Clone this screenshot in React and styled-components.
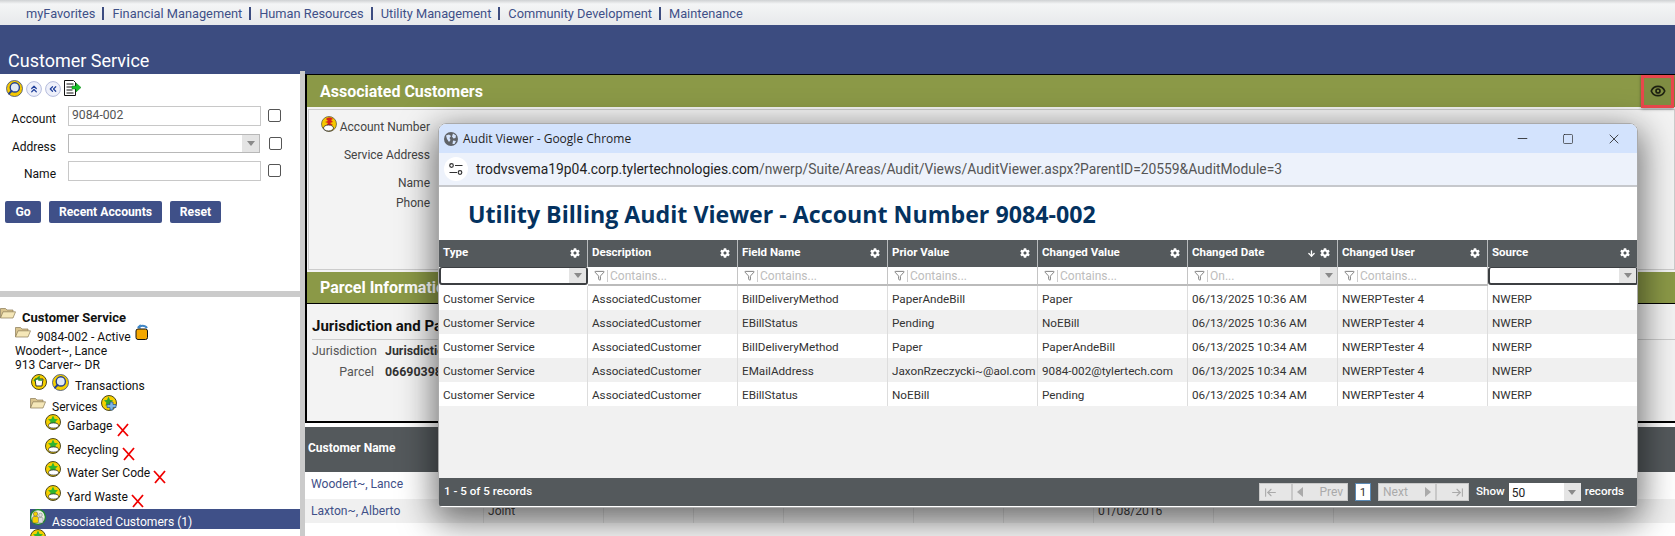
import React from 'react'
import styled, { createGlobalStyle } from 'styled-components'
import { FaCog } from 'react-icons/fa'
import { Eye, Minus, Square, X, Filter, ChevronsUp, ChevronsLeft, ArrowDown, ArrowLeftToLine, ArrowRightToLine } from 'lucide-react'

const GlobalStyle = createGlobalStyle`
  html, body {
    margin: 0;
    padding: 0;
    background: #fff;
    overflow: hidden;
    font-family: Roboto, "Liberation Sans", sans-serif;
  }
  * { box-sizing: border-box; }
`

const Page = styled.div`
  position: relative;
  width: 1675px;
  height: 536px;
  overflow: hidden;
  color: #222;
`

const TopNav = styled.nav`
  height: 25px;
  display: flex;
  align-items: center;
  padding: 1px 0 0 26px;
  background: linear-gradient(#cfd1d3 0, #f4f5f6 4px, #e7e9eb 100%);
  font-size: 12.8px;
  color: #3f5088;
`

const NavSep = styled.span`
  width: 2px;
  height: 13px;
  margin: 0 8px 0 7px;
  background: #3c4c80;
`

const TitleBand = styled.div`
  height: 49px;
  display: flex;
  align-items: flex-end;
  padding: 0 0 3px 8px;
  background: #3c4c80;
  color: #fff;
  font-size: 18px;
`

const Body = styled.div`
  display: flex;
  height: 462px;
`

const LeftPane = styled.div`
  width: 300px;
  flex: none;
`

const Splitter = styled.div`
  width: 5px;
  flex: none;
  margin-top: -3px;
  background: #cbcbcb;
`

const SearchBox = styled.div`
  height: 217px;
  padding: 6px 0 0 6px;
`

const Toolbar = styled.div`
  display: flex;
  gap: 3px;
  height: 17px;
  margin-bottom: 9px;
`

const FormRow = styled.div`
  display: flex;
  align-items: flex-start;
  height: 20px;
  margin-bottom: ${p => p.$mb || 8}px;
`

const FieldLabel = styled.label`
  width: 50px;
  margin-right: 12px;
  padding-top: 6px;
  text-align: right;
  font-size: 12px;
  color: #111;
`

const TextField = styled.div`
  width: 193px;
  height: 20px;
  padding: 1px 3px;
  background: #fff;
  border: 1px solid #c8c8c8;
  font-size: 12.2px;
  color: #555;
`

const SelectField = styled.div`
  width: 192px;
  height: 19px;
  display: flex;
  justify-content: flex-end;
  background: #fff;
  border: 1px solid #b8b8b8;
`

const SelectArrow = styled.span`
  width: 17px;
  display: flex;
  align-items: center;
  justify-content: center;
  background: #e4e4e4;
  &::after {
    content: '';
    border-left: 4px solid transparent;
    border-right: 4px solid transparent;
    border-top: 5px solid #8a8a8a;
  }
`

const Check = styled.span`
  width: 13px;
  height: 13px;
  margin: 3px 0 0 ${p => p.$ml || 7}px;
  background: #fff;
  border: 1px solid #555;
  border-radius: 2px;
`

const ButtonRow = styled.div`
  display: flex;
  gap: 8px;
  margin: 20px 0 0 -1px;
`

const ActionButton = styled.button`
  height: 22px;
  width: ${p => p.$w}px;
  padding: 0;
  background: #3f5088;
  border: 0;
  border-radius: 2px;
  color: #fff;
  font-family: Roboto, sans-serif;
  font-size: 12.2px;
  font-weight: 700;
`

const PaneDivider = styled.div`
  height: 6px;
  background: #cbcbcb;
`

const Tree = styled.div`
  padding-top: 10px;
  overflow: hidden;
  height: 239px;
`

const TreeRow = styled.div`
  display: flex;
  align-items: flex-start;
  height: ${p => p.$h || 24}px;
  padding-left: ${p => p.$indent || 0}px;
  font-size: ${p => (p.$bold ? 13 : 12.1)}px;
  font-weight: ${p => (p.$bold ? 700 : 400)};
  color: #111;
`

const TreeLabel = styled.span`
  margin: ${p => p.$top ?? 4}px 0 0 ${p => p.$left ?? 6}px;
  white-space: nowrap;
`

const SelectedRow = styled(TreeRow)`
  margin: 0 0 0 30px;
  padding: 0;
  background: #3f5088;
  color: #fff;
  height: 20px;
`

const RightPane = styled.div`
  flex: 1;
  min-width: 0;
`

const DetailBlock = styled.div`
  height: 349px;
  border-left: 2px solid #000;
  border-top: 1px solid #000;
  border-bottom: 2px solid #000;
  background: #f3f3f3;
`

const SectionHead = styled.div`
  display: flex;
  align-items: center;
  justify-content: space-between;
  height: 32px;
  padding-left: 13px;
  background: #8b9947;
  color: #fff;
  font-size: 16px;
  font-weight: 700;
  border-bottom: ${p => (p.$line ? '1px solid #000' : '0')};
`

const EyeBox = styled.span`
  width: 33px;
  height: 33px;
  margin-right: 1px;
  display: flex;
  align-items: center;
  justify-content: center;
  background: #7f8d42;
  border: 3px solid #e8474c;
  box-shadow: 0 1px 3px rgba(0, 0, 0, 0.4);
  color: #1c1f10;
`

const AccountPanel = styled.div`
  height: 161px;
  margin: 2px 0 2px 1px;
  padding: 3px 0 0 0;
  background: #f3f3f3;
  border: 1px solid #ccc;
  font-size: 12px;
  color: #444;
`

const AccountRow = styled.div`
  display: flex;
  justify-content: flex-end;
  align-items: center;
  width: 121px;
  height: ${p => p.$h || 28}px;
  gap: 3px;
`

const ParcelPanel = styled.div`
  padding: 13px 0 0 5px;
`

const ParcelTitle = styled.div`
  padding-bottom: 4px;
  border-bottom: 1px solid #ccc;
  font-size: 15px;
  font-weight: 700;
  color: #111;
`

const ParcelRow = styled.div`
  display: flex;
  gap: 11px;
  margin-top: ${p => p.$mt}px;
  font-size: 12.4px;
  color: #555;
`

const ParcelKey = styled.span`
  width: 62px;
  text-align: right;
`

const ParcelValue = styled.span`
  font-weight: 700;
  color: #333;
`

const CustomerTable = styled.div`
  margin-top: 4px;
`

const CustomerHead = styled.div`
  height: 45px;
  display: flex;
  align-items: center;
  padding: 0 0 4px 3px;
  background: #54595c;
  color: #fff;
  font-size: 12px;
  font-weight: 700;
`

const CustomerRow = styled.div`
  display: grid;
  grid-template-columns: 179px 120px 90px 90px 130px 90px 90px 120px 120px 1fr;
  height: ${p => p.$h}px;
  background: ${p => (p.$alt ? '#f0f0f0' : '#fff')};
`

const CustomerCell = styled.div`
  padding: 5px 0 0 ${p => (p.$link ? 6 : 4)}px;
  border-right: 1px solid #ddd;
  font-size: 12.1px;
  color: ${p => (p.$link ? '#3f5088' : '#444')};
  white-space: nowrap;
`

const AuditWindow = styled.div`
  position: absolute;
  left: 438px;
  top: 123px;
  width: 1200px;
  height: 385px;
  display: flex;
  flex-direction: column;
  overflow: hidden;
  background: #fff;
  border: 1px solid #aaa;
  border-radius: 8px 8px 4px 4px;
`

const WindowShadow = styled.div`
  position: absolute;
  left: 438px;
  top: 123px;
  width: 1200px;
  height: 385px;
  border-radius: 8px;
  box-shadow: 0 10px 34px 4px rgba(0, 0, 0, 0.55);
`

const ChromeBar = styled.div`
  height: 29px;
  flex: none;
  display: flex;
  align-items: center;
  padding-left: 5px;
  background: #d3e3fd;
  font-size: 12.5px;
  color: #1f1f1f;
`

const ChromeTitle = styled.span`
  flex: 1;
  margin-left: 5px;
  font-family: "Open Sans", sans-serif;
  font-size: 12px;
`

const WinButton = styled.span`
  width: 46px;
  display: flex;
  justify-content: center;
`

const UrlBar = styled.div`
  height: 34px;
  flex: none;
  display: flex;
  align-items: center;
  padding-left: 5px;
  background: #edf2fb;
  border-bottom: 2px solid #c6c8cc;
  font-size: 13.85px;
  color: #1f1f1f;
`

const SiteChip = styled.span`
  width: 24px;
  height: 24px;
  display: flex;
  align-items: center;
  justify-content: center;
  margin-right: 8px;
  border-radius: 50%;
  background: #fff;
`

const UrlMuted = styled.span`
  color: #555;
`

const AuditHeading = styled.h1`
  height: 53px;
  flex: none;
  margin: 0;
  padding: 12px 0 0 29px;
  font-family: "Open Sans", sans-serif;
  font-size: 23.2px;
  font-weight: 700;
  line-height: 30px;
  color: #04325f;
`

const Grid = styled.div`
  flex: 1;
  min-height: 0;
  background: #f1f1f1;
`

const GridRow = styled.div`
  display: grid;
  grid-template-columns: 149px repeat(7, 150px);
  height: ${p => p.$h || 24}px;
  background: ${p => p.$bg || '#fff'};
`

const HeadCell = styled.div`
  display: flex;
  align-items: flex-start;
  justify-content: space-between;
  padding: 5px 7px 0 4px;
  border-right: 1px solid #b8bbbd;
  color: #fff;
  font-size: 11.5px;
  font-weight: 700;
  line-height: 14px;
`

const HeadIcons = styled.span`
  display: flex;
  align-items: center;
  gap: 4px;
  padding-top: 3px;
`

const FilterCell = styled.div`
  display: flex;
  align-items: center;
  justify-content: space-between;
  padding-left: 6px;
  border-right: 1px solid #c4c4c4;
  border-bottom: 2px solid #bbb;
  background: #fff;
  font-size: 12px;
  color: #bdbdbd;
`

const FilterText = styled.span`
  display: flex;
  align-items: center;
  gap: 2px;
  flex: 1;
`

const FilterBar = styled.span`
  width: 1px;
  height: 12px;
  background: #ccc;
`

const DropFilter = styled.div`
  display: flex;
  justify-content: flex-end;
  height: 18px;
  background: #fff;
  border: 2px solid #3c3f42;
  border-top-width: 1px;
  border-radius: 3px;
  overflow: hidden;
`

const DataCell = styled.div`
  display: flex;
  align-items: center;
  padding: 1px 0 0 4px;
  border-right: 1px solid #ddd;
  font-size: 11.7px;
  color: #333;
  white-space: nowrap;
`

const GridEmpty = styled.div`
  height: 71px;
  background: #f1f1f1;
`

const Footer = styled.div`
  height: 29px;
  flex: none;
  display: flex;
  align-items: center;
  justify-content: space-between;
  padding: 0 13px 0 5px;
  background: #54595c;
  border-bottom: 1px solid #fff;
  color: #fff;
  font-size: 11.6px;
  font-weight: 500;
`

const FooterText = styled.span`
  margin: 0 0 3px ${p => p.$ml || 0}px;
`

const Pager = styled.div`
  display: flex;
  align-items: center;
`

const PagerButton = styled.span`
  width: ${p => p.$w}px;
  height: 18px;
  display: flex;
  align-items: center;
  justify-content: ${p => p.$end ? 'flex-end' : 'space-between'};
  padding: 0 4px;
  margin-left: ${p => p.$ml || 0}px;
  background: #e6e6e6;
  border: 1px solid #c8c8c8;
  font-size: 12px;
  font-weight: 400;
  color: #aaa;
`

const PageBox = styled.span`
  width: 16px;
  height: 18px;
  margin-left: 7px;
  display: flex;
  align-items: center;
  justify-content: center;
  background: #fff;
  border: 1px solid #5b8ab5;
  font-weight: 400;
  color: #333;
`

const ShowSelect = styled.span`
  width: 72px;
  height: 18px;
  margin: 0 4px;
  display: flex;
  justify-content: space-between;
  background: #fff;
  color: #222;
  font-size: 12px;
  font-weight: 400;
  padding-left: 3px;
  line-height: 20px;
`

const Tri = styled.span`
  width: 0;
  height: 0;
  border-top: 5px solid transparent;
  border-bottom: 5px solid transparent;
  ${p => (p.$dir === 'left' ? 'border-right: 6px solid #aaa;' : 'border-left: 6px solid #aaa;')}
`

/* little app icons, drawn by hand */
const MagnifierIcon = ({ size = 17, ring = '#f5c800' }) => (
  <svg width={size} height={size} viewBox="0 0 17 17">
    <circle cx="8.5" cy="8.5" r="8" fill={ring} stroke="#3a4a7a" strokeWidth="0.8" />
    <circle cx="8.8" cy="7.4" r="4.6" fill="#dfe8f6" stroke="#24408e" strokeWidth="1.4" />
    <path d="M5.6 11 L3 13.6" stroke="#24408e" strokeWidth="2" strokeLinecap="round" />
  </svg>
)

const RoundChevrons = ({ Icon }) => (
  <svg width="16" height="16" viewBox="0 0 16 16" style={{ marginTop: 1 }}>
    <circle cx="8" cy="8" r="7.4" fill="#eef0fa" stroke="#b4bbdc" />
    <Icon x="2.5" y="2.5" width="11" height="11" color="#1f3f9a" strokeWidth={2.6} />
  </svg>
)

const DocArrowIcon = () => (
  <svg width="17" height="16" viewBox="0 0 17 16">
    <path d="M.5.5h9l2 2v13h-11z" fill="#fff" stroke="#111" />
    <path d="M2.5 4h7M2.5 7h6M2.5 10h6M2.5 13h7" stroke="#111" />
    <path d="M8 6h4V3l5 4.5L12 12V9H8z" fill="#19c32a" stroke="#0a7d16" strokeWidth="0.5" />
  </svg>
)

const FolderIcon = () => (
  <svg width="16" height="12" viewBox="0 0 16 12">
    <path d="M.5 11V1.5h5l1.500 1.500H13v2" fill="#d9c48f" stroke="#8a7a55" strokeWidth="0.7" />
    <path d="M.5 11 3 4.800h12.500L13 11z" fill="#f5e7b8" stroke="#8a7a55" strokeWidth="0.7" />
  </svg>
)

const AccountIcon = () => (
  <svg width="14" height="16" viewBox="0 0 14 16" style={{ marginLeft: 4, marginTop: -2 }}>
    <path d="M3 4a5 4 0 0 1 9 0" fill="none" stroke="#3f86c6" strokeWidth="2" />
    <path d="M5.500 0v5l-3-2z" fill="#3f86c6" />
    <rect x="1" y="5" width="11.500" height="10.500" rx="2" fill="#f5a800" stroke="#111" />
  </svg>
)

const BadgeIcon = ({ kind }) => (
  <svg width="16" height="16" viewBox="0 0 16 16">
    <circle cx="8" cy="8" r="7.500" fill="#f5d000" stroke="#3a3610" strokeWidth="0.9" />
    {kind === 'tx' && <path d="M4 5h8l-1 7H5z" fill="#fff" stroke="#333" />}
    {kind === 'tx' && <path d="M3 7 8 3v3h3" fill="none" stroke="#2a9a2a" strokeWidth="1.500" />}
    {kind === 'service' && <path d="M8 1.500 9.600 5 13 5.300 10.500 7.500 11.200 11 8 9.200 4.800 11 5.500 7.500 3 5.300 6.400 5z" fill="#2fb52f" />}
    {kind === 'service' && <ellipse cx="8.500" cy="11.500" rx="5" ry="2.600" fill="#fff" stroke="#333" strokeWidth="0.8" />}
    {kind === 'add' && <path d="M7.500 1.500 9 5 12 5.300 9.800 7.500 10.500 11 7.500 9.200 4.500 11 5.200 7.500 3 5.300 6 5z" fill="#2fa52f" />}
    {kind === 'add' && <path d="M9 7h3v2.500h3v3h-3V15H9v-2.500H6v-3h3z" fill="#7db4e6" stroke="#27507c" strokeWidth="0.7" />}
  </svg>
)

const PeopleIcon = () => (
  <svg width="16" height="16" viewBox="0 0 16 16">
    <circle cx="8" cy="8" r="7.400" fill="#e9eee0" stroke="#1f8a2f" strokeWidth="1.300" />
    <circle cx="5.500" cy="5" r="2.200" fill="#f5d000" stroke="#555" strokeWidth="0.5" />
    <rect x="2.500" y="7.500" width="6" height="6.500" rx="1.500" fill="#f5d000" stroke="#555" strokeWidth="0.5" />
    <circle cx="10.500" cy="6" r="1.800" fill="#ddd" stroke="#777" strokeWidth="0.5" />
    <rect x="8.500" y="8.500" width="4.500" height="5.500" rx="1.200" fill="#ddd" stroke="#777" strokeWidth="0.5" />
  </svg>
)

const DragonIcon = () => (
  <svg width="16" height="16" viewBox="0 0 16 16" style={{ marginTop: -6 }}>
    <circle cx="8" cy="8" r="7.500" fill="#f5c800" stroke="#333" strokeWidth="0.6" />
    <path d="M5 3c2-2 5-2 7 0l-2 1 2 2-3 1 3 2-7 1 2-3-3-1 3-1z" fill="#d6211f" />
    <ellipse cx="7.500" cy="12" rx="5" ry="3" fill="#fff" stroke="#333" strokeWidth="0.8" />
  </svg>
)

const RedX = () => (
  <svg width="14" height="14" viewBox="0 0 14 14" style={{ margin: '9px 0 0 3px', flex: 'none' }}>
    <path d="M1 1 12 13M12 1 2 13" stroke="#f00000" strokeWidth="1.800" />
  </svg>
)

const GlobeIcon = () => (
  <svg width="14" height="14" viewBox="0 0 14 14">
    <circle cx="7" cy="7" r="7" fill="#5f6368" />
    <path d="M2 3.500 5 2.500 7 4 5.500 6 6.500 8 5 10 3 7zM9 1.500l3 2-.5 2.500-2 .5L8 4.500zM9 8.500l3 .5-1.500 3L8.500 12z" fill="#d3e3fd" />
  </svg>
)

const TuneIcon = () => (
  <svg width="14" height="12" viewBox="0 0 14 12" fill="none" stroke="#333" strokeWidth="1.200">
    <circle cx="2.500" cy="2.500" r="1.800" />
    <path d="M6 2.500h7.500M.5 9.500H8" />
    <circle cx="11" cy="9.500" r="1.800" />
  </svg>
)

const COLUMNS = ['Type', 'Description', 'Field Name', 'Prior Value', 'Changed Value', 'Changed Date', 'Changed User', 'Source']

const AUDIT_ROWS = [
  ['BillDeliveryMethod', 'PaperAndeBill', 'Paper', '06/13/2025 10:36 AM'],
  ['EBillStatus', 'Pending', 'NoEBill', '06/13/2025 10:36 AM'],
  ['BillDeliveryMethod', 'Paper', 'PaperAndeBill', '06/13/2025 10:34 AM'],
  ['EMailAddress', 'JaxonRzeczycki~@aol.com', '9084-002@tylertech.com', '06/13/2025 10:34 AM'],
  ['EBillStatus', 'NoEBill', 'Pending', '06/13/2025 10:34 AM'],
]

const SERVICES = ['Garbage', 'Recycling', 'Water Ser Code', 'Yard Waste']

const NAV_ITEMS = ['myFavorites', 'Financial Management', 'Human Resources', 'Utility Management', 'Community Development', 'Maintenance']

const ContainsFilter = ({ text = 'Contains...', arrow }) => (
  <FilterCell>
    <FilterText>
      <Filter size={11} color="#777" />
      <FilterBar />
      {text}
    </FilterText>
    {arrow && <SelectArrow style={{ alignSelf: 'stretch' }} />}
  </FilterCell>
)

const App = () => (
  <Page>
    <GlobalStyle />
    <TopNav>
      {NAV_ITEMS.map((item, i) => (
        <React.Fragment key={item}>
          {i > 0 && <NavSep />}
          <span>{item}</span>
        </React.Fragment>
      ))}
    </TopNav>
    <TitleBand>Customer Service</TitleBand>
    <Body>
      <LeftPane>
        <SearchBox>
          <Toolbar>
            <MagnifierIcon />
            <RoundChevrons Icon={ChevronsUp} />
            <RoundChevrons Icon={ChevronsLeft} />
            <DocArrowIcon />
          </Toolbar>
          <FormRow>
            <FieldLabel>Account</FieldLabel>
            <TextField>9084-002</TextField>
            <Check />
          </FormRow>
          <FormRow $mb={7}>
            <FieldLabel>Address</FieldLabel>
            <SelectField>
              <SelectArrow />
            </SelectField>
            <Check $ml={9} />
          </FormRow>
          <FormRow>
            <FieldLabel>Name</FieldLabel>
            <TextField />
            <Check />
          </FormRow>
          <ButtonRow>
            <ActionButton $w={36}>Go</ActionButton>
            <ActionButton $w={113}>Recent Accounts</ActionButton>
            <ActionButton $w={51}>Reset</ActionButton>
          </ButtonRow>
        </SearchBox>
        <PaneDivider />
        <Tree>
          <TreeRow $h={19} $bold>
            <FolderIcon />
            <TreeLabel $left={6} $top={3}>Customer Service</TreeLabel>
          </TreeRow>
          <TreeRow $h={18} $indent={15}>
            <FolderIcon />
            <TreeLabel $top={4}>9084-002 - Active</TreeLabel>
            <AccountIcon />
          </TreeRow>
          <TreeRow $h={14} $indent={15}>Woodert~, Lance</TreeRow>
          <TreeRow $h={16} $indent={15}>913 Carver~ DR</TreeRow>
          <TreeRow $h={21} $indent={31}>
            <BadgeIcon kind="tx" />
            <span style={{ width: 5 }} />
            <MagnifierIcon size={17} ring="#f5d000" />
            <TreeLabel $top={5}>Transactions</TreeLabel>
          </TreeRow>
          <TreeRow $h={19} $indent={30}>
            <span style={{ marginTop: 2 }}><FolderIcon /></span>
            <TreeLabel $top={5}>Services</TreeLabel>
            <span style={{ marginLeft: 3 }}><BadgeIcon kind="add" /></span>
          </TreeRow>
          {SERVICES.map(name => (
            <TreeRow key={name} $indent={45} $h={name === 'Yard Waste' ? 24 : 23.7}>
              <BadgeIcon kind="service" />
              <TreeLabel $top={5}>{name}</TreeLabel>
              <RedX />
            </TreeRow>
          ))}
          <SelectedRow>
            <PeopleIcon />
            <TreeLabel $top={6}>Associated Customers (1)</TreeLabel>
          </SelectedRow>
          <TreeRow $indent={30} $h={10}>
            <BadgeIcon kind="service" />
          </TreeRow>
        </Tree>
      </LeftPane>
      <Splitter />
      <RightPane>
        <DetailBlock>
          <SectionHead>
            Associated Customers
            <EyeBox>
              <Eye size={16} strokeWidth={2.5} />
            </EyeBox>
          </SectionHead>
          <AccountPanel>
            <AccountRow>
              <DragonIcon />
              Account Number
            </AccountRow>
            <AccountRow>Service Address</AccountRow>
            <AccountRow>Name</AccountRow>
            <AccountRow $h={12}>Phone</AccountRow>
          </AccountPanel>
          <SectionHead $line>Parcel Information</SectionHead>
          <ParcelPanel>
            <ParcelTitle>Jurisdiction and Parcel</ParcelTitle>
            <ParcelRow $mt={3}>
              <ParcelKey>Jurisdiction</ParcelKey>
              <ParcelValue>Jurisdiction</ParcelValue>
            </ParcelRow>
            <ParcelRow $mt={6}>
              <ParcelKey>Parcel</ParcelKey>
              <ParcelValue>06690398</ParcelValue>
            </ParcelRow>
          </ParcelPanel>
        </DetailBlock>
        <CustomerTable>
          <CustomerHead>Customer Name</CustomerHead>
          <CustomerRow $h={27}>
            <CustomerCell $link>Woodert~, Lance</CustomerCell>
          </CustomerRow>
          <CustomerRow $h={24} $alt>
            <CustomerCell $link>Laxton~, Alberto</CustomerCell>
            <CustomerCell>Joint</CustomerCell>
            <CustomerCell />
            <CustomerCell />
            <CustomerCell />
            <CustomerCell />
            <CustomerCell />
            <CustomerCell>01/08/2016</CustomerCell>
            <CustomerCell />
          </CustomerRow>
        </CustomerTable>
      </RightPane>
    </Body>

    <WindowShadow />
    <AuditWindow>
      <ChromeBar>
        <GlobeIcon />
        <ChromeTitle>Audit Viewer - Google Chrome</ChromeTitle>
        <WinButton><Minus size={15} strokeWidth={1.3} /></WinButton>
        <WinButton><Square size={12} strokeWidth={1.3} /></WinButton>
        <WinButton><X size={16} strokeWidth={1.2} /></WinButton>
      </ChromeBar>
      <UrlBar>
        <SiteChip><TuneIcon /></SiteChip>
        trodvsvema19p04.corp.tylertechnologies.com
        <UrlMuted>/nwerp/Suite/Areas/Audit/Views/AuditViewer.aspx?ParentID=20559&amp;AuditModule=3</UrlMuted>
      </UrlBar>
      <AuditHeading>Utility Billing Audit Viewer - Account Number 9084-002</AuditHeading>
      <Grid>
        <GridRow $h={27} $bg="#54595c">
          {COLUMNS.map(col => (
            <HeadCell key={col}>
              {col}
              <HeadIcons>
                {col === 'Changed Date' && <ArrowDown size={9} strokeWidth={3.5} />}
                <FaCog size={10} />
              </HeadIcons>
            </HeadCell>
          ))}
        </GridRow>
        <GridRow $h={19}>
          <DropFilter><SelectArrow /></DropFilter>
          <ContainsFilter />
          <ContainsFilter />
          <ContainsFilter />
          <ContainsFilter />
          <ContainsFilter text="On..." arrow />
          <ContainsFilter />
          <DropFilter><SelectArrow /></DropFilter>
        </GridRow>
        {AUDIT_ROWS.map((row, i) => (
          <GridRow key={i} $bg={i % 2 ? '#f0f0f0' : '#fff'}>
            <DataCell>Customer Service</DataCell>
            <DataCell>AssociatedCustomer</DataCell>
            {row.map((val, j) => (
              <DataCell key={j}>{val}</DataCell>
            ))}
            <DataCell>NWERPTester 4</DataCell>
            <DataCell>NWERP</DataCell>
          </GridRow>
        ))}
        <GridEmpty />
      </Grid>
      <Footer>
        <FooterText>1 - 5 of 5 records</FooterText>
        <Pager>
          <PagerButton $w={33}><ArrowLeftToLine size={13} color="#aaa" /></PagerButton>
          <PagerButton $w={56}><Tri $dir="left" />Prev</PagerButton>
          <PageBox>1</PageBox>
          <PagerButton $w={58} $ml={7}>Next<Tri /></PagerButton>
          <PagerButton $w={33} $end><ArrowRightToLine size={13} color="#aaa" /></PagerButton>
          <FooterText $ml={7}>Show</FooterText>
          <ShowSelect>50<SelectArrow /></ShowSelect>
          <FooterText>records</FooterText>
        </Pager>
      </Footer>
    </AuditWindow>
  </Page>
)

export default App
